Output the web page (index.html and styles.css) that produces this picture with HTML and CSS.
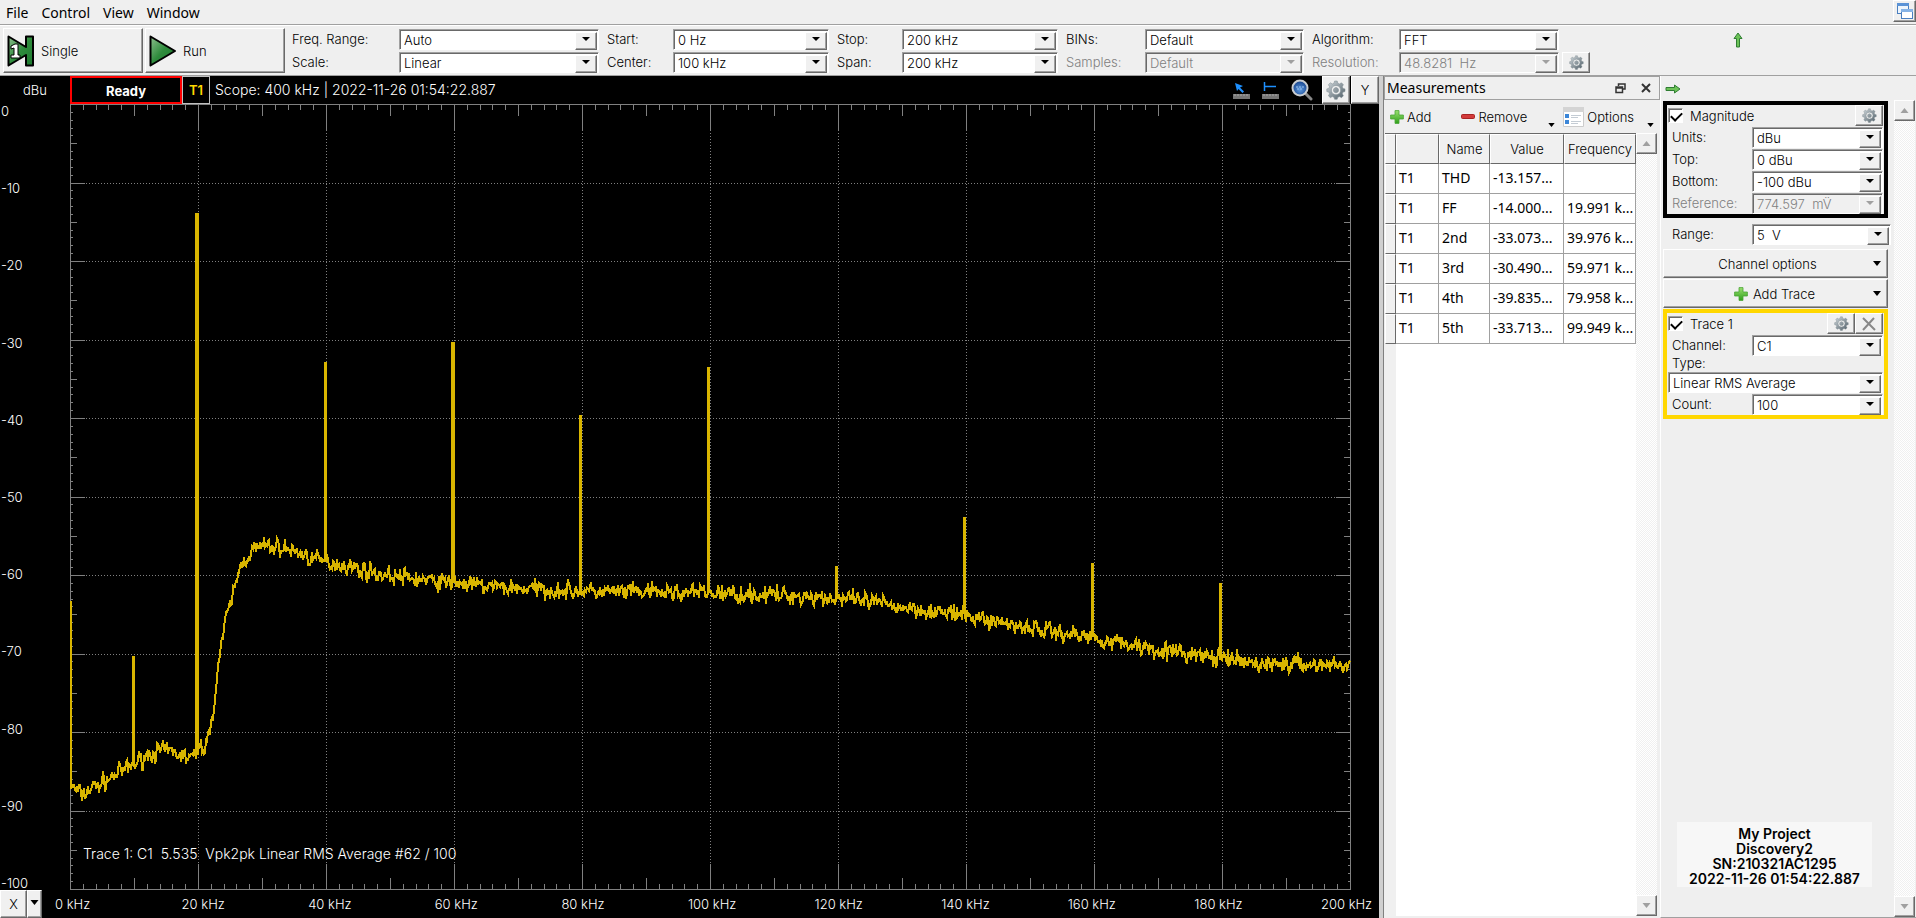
FILE: index.html
```html
<!DOCTYPE html>
<html lang="en">

<head>
    <meta charset="UTF-8">
    <meta name="viewport" content="width=device-width, initial-scale=1.0">
    <title>Spectrum</title>
    <link rel="stylesheet" href="styles.css">
</head>

<body>
    <svg class="defs" aria-hidden="true">
        <defs>
            <linearGradient id="green" x1="0" y1="0" x2="1" y2="1">
                <stop offset="0" stop-color="#8fc08f" />
                <stop offset="0.5" stop-color="#2e8b3c" />
                <stop offset="1" stop-color="#1d7a2f" />
            </linearGradient>
            <linearGradient id="metal" x1="0" y1="0" x2="1" y2="1">
                <stop offset="0" stop-color="#d3dade" />
                <stop offset="1" stop-color="#4d5c65" />
            </linearGradient>
            <linearGradient id="plus" x1="0" y1="0" x2="0" y2="1">
                <stop offset="0" stop-color="#9be070" />
                <stop offset="1" stop-color="#2ea01a" />
            </linearGradient>
            <radialGradient id="lens" cx="0.5" cy="0.6">
                <stop offset="0" stop-color="#5f9be0" />
                <stop offset="1" stop-color="#1c4c96" />
            </radialGradient>
            <symbol id="gear" viewBox="0 0 20 20">
                <path fill="url(#metal)" fill-rule="evenodd" stroke="#7b888f" stroke-width="0.5" d="M8.600 1h2.600l.6 2.200 1.700.7 2-1.100 1.900 1.900-1.100 2 .7 1.700 2 .5v2.600l-2 .6-.7 1.700 1.100 2-1.900 1.900-2-1.100-1.700.7-.6 2H8.600L8 17.300l-1.700-.7-2 1.100-1.900-1.900 1.100-2-.7-1.700-2-.6V8.900l2-.5.7-1.700-1.100-2 1.900-1.900 2 1.100L8 3.200zM10 5.500a4.600 4.600 0 1 0 .01 0zM10 7.600a2.600 2.600 0 1 1-.01 0z" />
            </symbol>
            <symbol id="add" viewBox="0 0 14 14">
                <path fill="url(#plus)" stroke="#4aa536" stroke-width="0.8" d="M5 .6h4V5h4.400v4H9v4.400H5V9H.6V5H5z" />
            </symbol>
            <symbol id="arrow" viewBox="0 0 16 10">
                <path fill="#6cc257" stroke="#2f7d32" stroke-width="1" d="M1 3.500h8.500V1L15 5 9.500 9V6.500H1z" />
            </symbol>
            <symbol id="down" viewBox="0 0 8 5">
                <path fill="currentColor" d="M0 0h8L4 5z" />
            </symbol>
        </defs>
    </svg>

    <nav class="menubar">
        <button>File</button>
        <button>Control</button>
        <button>View</button>
        <button>Window</button>
        <button class="window-button raised" aria-label="Windows">
            <svg width="18" height="18" viewBox="0 0 18 18">
                <rect x="1.500" y="1.500" width="11" height="10" fill="#eef5fc" stroke="#4a7fc0" />
                <path d="M1 1h12v3H1z" fill="#5b93d6" />
                <rect x="5.500" y="7.500" width="11" height="9" fill="#fff" stroke="#4a7fc0" />
                <path d="M5 7h12v3H5z" fill="#86b3e6" />
            </svg>
        </button>
    </nav>

    <section class="toolbar">
        <button class="run-button raised">
            <svg width="28" height="32" viewBox="0 0 28 32">
                <path d="M1.500 1.500L19 12V1.500h7v29h-7V20L1.500 30.500z" fill="url(#green)" stroke="#000" stroke-width="2" stroke-linejoin="round" />
                <path d="M4 11l4-2h3v11h2v3H4v-3h3v-7l-3 1z" fill="#fff" stroke="#000" stroke-width="1" />
            </svg>
            Single
        </button>
        <button class="run-button raised">
            <svg width="28" height="32" viewBox="0 0 28 32">
                <path d="M1.500 1.500L26 16 1.500 30.500z" fill="url(#green)" stroke="#000" stroke-width="2" stroke-linejoin="round" />
            </svg>
            Run
        </button>
        <div class="fields range-fields">
            <label for="freq-range">Freq. Range:</label>
            <span class="combo"><select id="freq-range"><option>Auto</option></select></span>
            <label for="scale">Scale:</label>
            <span class="combo"><select id="scale"><option>Linear</option></select></span>
        </div>
        <div class="fields start-fields">
            <label for="start">Start:</label>
            <span class="combo"><select id="start"><option>0 Hz</option></select></span>
            <label for="center">Center:</label>
            <span class="combo"><select id="center"><option>100 kHz</option></select></span>
        </div>
        <div class="fields stop-fields">
            <label for="stop">Stop:</label>
            <span class="combo"><select id="stop"><option>200 kHz</option></select></span>
            <label for="span">Span:</label>
            <span class="combo"><select id="span"><option>200 kHz</option></select></span>
        </div>
        <div class="fields bins-fields">
            <label for="bins">BINs:</label>
            <span class="combo"><select id="bins"><option>Default</option></select></span>
            <label for="samples" class="off">Samples:</label>
            <span class="combo off"><select id="samples" disabled><option>Default</option></select></span>
        </div>
        <div class="fields algorithm-fields">
            <label for="algorithm">Algorithm:</label>
            <span class="combo"><select id="algorithm"><option>FFT</option></select></span>
            <label for="resolution" class="off">Resolution:</label>
            <span class="combo off"><select id="resolution" disabled><option>48.8281&nbsp; Hz</option></select></span>
        </div>
        <button class="gear-button raised" aria-label="Settings"><svg width="15" height="15"><use href="#gear" /></svg></button>
        <svg class="up-arrow" width="16" height="10"><use href="#arrow" /></svg>
    </section>

    <main class="workspace">
        <section class="scope">
            <header class="scope-header">
                <span class="unit">dBu</span>
                <span class="status">Ready</span>
                <span class="trace-tag">T1</span>
                <span class="scope-info">Scope: 400 kHz | 2022-11-26 01:54:22.887</span>
                <div class="scope-tools">
                    <svg width="17" height="17" viewBox="0 0 17 17">
                        <path d="M2 1l8 3-3 1.500 4 4-1.500 1.500-4-4L4 9z" fill="#1e90ff" />
                        <path d="M0 12h17v5H0z" fill="#777" />
                        <path d="M2 12v2M5 12v2M8 12v2M11 12v2M14 12v2" stroke="#aaa" />
                    </svg>
                    <svg width="17" height="17" viewBox="0 0 17 17">
                        <path d="M2.500 0v9M2 4.500h12" stroke="#1e90ff" stroke-width="1.500" fill="none" />
                        <path d="M0 12h17v5H0z" fill="#777" />
                        <path d="M2 12v2M5 12v2M8 12v2M11 12v2M14 12v2" stroke="#aaa" />
                    </svg>
                    <svg width="22" height="22" viewBox="0 0 22 22">
                        <path d="M15 15l5 5" stroke="#888" stroke-width="3" stroke-linecap="round" />
                        <circle cx="9" cy="9" r="7.500" fill="url(#lens)" stroke="#c8ccd0" stroke-width="2" />
                        <path d="M5 8h8M6 10h6" stroke="#9cc4f0" stroke-width="1" stroke-dasharray="2 1" />
                    </svg>
                </div>
                <button class="scope-button raised" aria-label="Plot options"><svg width="20" height="20"><use href="#gear" /></svg></button>
                <button class="scope-button raised">Y</button>
            </header>
            <div class="scope-body">
                <div class="y-axis">
                    <span>0</span><span>-10</span><span>-20</span><span>-30</span><span>-40</span><span>-50</span><span>-60</span><span>-70</span><span>-80</span><span>-90</span><span>-100</span>
                </div>
                <div class="plot">
                    <svg id="plot" viewBox="0 0 1281 786" preserveAspectRatio="none">
                        <path id="grid" />
                        <path id="ticks" />
                        <polyline id="trace" />
                    </svg>
                    <span class="plot-note">Trace 1: C1&nbsp; 5.535&nbsp; Vpk2pk Linear RMS Average #62 / 100</span>
                </div>
            </div>
            <footer class="scope-footer">
                <button class="x-button raised">X</button>
                <button class="x-menu raised" aria-label="X options"><svg width="9" height="5"><use href="#down" /></svg></button>
                <div class="x-axis">
                    <span>0 kHz</span><span>20 kHz</span><span>40 kHz</span><span>60 kHz</span><span>80 kHz</span><span>100 kHz</span><span>120 kHz</span><span>140 kHz</span><span>160 kHz</span><span>180 kHz</span><span>200 kHz</span>
                </div>
            </footer>
        </section>

        <section class="measurements">
            <header class="dock-title">
                <h2>Measurements</h2>
                <svg width="11" height="11" viewBox="0 0 11 11">
                    <path d="M3.500 3V1h6.500v5H8" fill="none" stroke="#333" stroke-width="1.500" />
                    <path d="M1 4h6.500v5.500H1zM1 5h6" fill="none" stroke="#333" stroke-width="1.500" />
                </svg>
                <svg width="10" height="10" viewBox="0 0 10 10"><path d="M1 1l8 8M9 1L1 9" stroke="#333" stroke-width="2" /></svg>
            </header>
            <div class="dock-tools">
                <button><svg width="14" height="14"><use href="#add" /></svg>Add</button>
                <button class="remove-button">
                    <svg width="14" height="5" viewBox="0 0 14 5"><rect x="0.500" y="0.500" width="13" height="4" rx="1" fill="#d23a3a" stroke="#a82424" /></svg>Remove
                    <svg class="menu-mark" width="7" height="4"><use href="#down" /></svg>
                </button>
                <button class="options-button">
                    <svg width="21" height="20" viewBox="0 0 21 20">
                        <path d="M.5.5h20v19H.5z" fill="#fff" stroke="#ccc" />
                        <path d="M0 0h21v5H0z" fill="#d4d4d4" />
                        <path d="M2 7h4v4H2zM2 13h4v4H2z" fill="#3b86d8" />
                        <path d="M8 8.500h10M8 10.500h7M8 14.500h10M8 16.500h7" stroke="#c4ccd4" />
                    </svg>Options
                    <svg class="menu-mark" width="7" height="4"><use href="#down" /></svg>
                </button>
            </div>
            <div class="table-area">
                <div class="table-scroll">
                    <table>
                        <thead>
                            <tr><th class="stub"></th><th class="col-trace"></th><th class="col-name">Name</th><th class="col-value">Value</th><th class="col-freq">Frequency</th></tr>
                        </thead>
                        <tbody>
                            <tr><th class="stub"></th><td>T1</td><td>THD</td><td>-13.157...</td><td></td></tr>
                            <tr><th class="stub"></th><td>T1</td><td>FF</td><td>-14.000...</td><td>19.991 k...</td></tr>
                            <tr><th class="stub"></th><td>T1</td><td>2nd</td><td>-33.073...</td><td>39.976 k...</td></tr>
                            <tr><th class="stub"></th><td>T1</td><td>3rd</td><td>-30.490...</td><td>59.971 k...</td></tr>
                            <tr><th class="stub"></th><td>T1</td><td>4th</td><td>-39.835...</td><td>79.958 k...</td></tr>
                            <tr><th class="stub"></th><td>T1</td><td>5th</td><td>-33.713...</td><td>99.949 k...</td></tr>
                        </tbody>
                    </table>
                </div>
                <div class="scrollbar">
                    <button class="raised" aria-label="Scroll up"><svg class="flip" width="9" height="5"><use href="#down" /></svg></button>
                    <button class="raised" aria-label="Scroll down"><svg width="9" height="5"><use href="#down" /></svg></button>
                </div>
            </div>
        </section>

        <aside class="channels">
            <header class="channels-header"><svg width="16" height="10"><use href="#arrow" /></svg></header>
            <div class="channels-body">
                <div class="channel-list">
                    <div class="group">
                        <div class="group-title">
                            <input type="checkbox" id="magnitude" checked>
                            <label for="magnitude">Magnitude</label>
                            <button class="gear-button raised" aria-label="Magnitude options"><svg width="15" height="15"><use href="#gear" /></svg></button>
                        </div>
                        <div class="row">
                            <label for="units">Units:</label>
                            <span class="combo"><select id="units"><option>dBu</option></select></span>
                        </div>
                        <div class="row">
                            <label for="top">Top:</label>
                            <span class="combo"><select id="top"><option>0 dBu</option></select></span>
                        </div>
                        <div class="row">
                            <label for="bottom">Bottom:</label>
                            <span class="combo"><select id="bottom"><option>-100 dBu</option></select></span>
                        </div>
                        <div class="row">
                            <label for="reference" class="off">Reference:</label>
                            <span class="combo off"><select id="reference" disabled><option>774.597&nbsp; mV̈</option></select></span>
                        </div>
                    </div>
                    <div class="row range-row">
                        <label for="range">Range:</label>
                        <span class="combo"><select id="range"><option>5&nbsp; V</option></select></span>
                    </div>
                    <button class="wide-button raised">Channel options<svg class="menu-mark" width="8" height="5"><use href="#down" /></svg></button>
                    <button class="wide-button add-button raised"><svg width="14" height="14"><use href="#add" /></svg>Add Trace<svg class="menu-mark" width="8" height="5"><use href="#down" /></svg></button>
                    <div class="group trace-group">
                        <div class="group-title">
                            <input type="checkbox" id="trace1" checked>
                            <label for="trace1">Trace 1</label>
                            <button class="gear-button raised" aria-label="Trace options"><svg width="15" height="15"><use href="#gear" /></svg></button>
                            <button class="gear-button raised" aria-label="Remove trace"><svg width="14" height="14" viewBox="0 0 14 14"><path d="M1 1l12 12M12 1L1 13" stroke="#888" stroke-width="2" /></svg></button>
                        </div>
                        <div class="row">
                            <label for="channel">Channel:</label>
                            <span class="combo"><select id="channel"><option>C1</option></select></span>
                        </div>
                        <label class="type-label" for="type">Type:</label>
                        <div class="row">
                            <span class="combo"><select id="type"><option>Linear RMS Average</option></select></span>
                        </div>
                        <div class="row">
                            <label for="count">Count:</label>
                            <span class="combo"><select id="count"><option>100</option></select></span>
                        </div>
                    </div>
                    <div class="device-info">My Project<br>Discovery2<br>SN:210321AC1295<br>2022-11-26 01:54:22.887</div>
                </div>
                <div class="scrollbar">
                    <button class="raised" aria-label="Scroll up"><svg class="flip" width="9" height="5"><use href="#down" /></svg></button>
                    <button class="raised" aria-label="Scroll down"><svg width="9" height="5"><use href="#down" /></svg></button>
                </div>
            </div>
        </aside>
    </main>

    <script src="script.js"></script>
</body>

</html>
```
FILE: styles.css
```css
* {
    box-sizing: border-box;
}

body {
    margin: 0;
    height: 100vh;
    display: flex;
    flex-direction: column;
    overflow: hidden;
    background-color: #efefef;
    color: #000;
    font-family: Inter, "Liberation Sans", sans-serif;
    font-size: 13px;
    font-weight: 300;
    line-height: 16px;
}

button,
select {
    font: inherit;
    color: inherit;
}

button {
    display: flex;
    align-items: center;
    justify-content: center;
    padding: 0;
    border: none;
    background: none;
}

svg {
    display: block;
    flex: none;
}

.defs {
    position: absolute;
    width: 0;
    height: 0;
}

.raised {
    background-color: #f0f0f0;
    border: 1px solid;
    border-color: #fff #696969 #696969 #fff;
    box-shadow: inset -1px -1px #a0a0a0;
}

.off {
    color: #808080;
}

/* Menu bar */
.menubar {
    display: flex;
    height: 26px;
    padding-left: 6px;
    gap: 13px;
    border-bottom: 1px solid #fff;
    box-shadow: inset 0 -1px #a0a0a0;
    font-family: "Noto Sans", sans-serif;
    font-size: 14px;
    font-weight: 400;
}

.window-button {
    width: 23px;
    height: 22px;
    margin-left: auto;
}

/* Toolbar */
.toolbar {
    display: flex;
    align-items: center;
    height: 50px;
    padding: 2px 0 2px 3px;
    border-bottom: 1px solid #a0a0a0;
}

.run-button {
    width: 140px;
    height: 45px;
    margin-right: 2px;
    padding-left: 3px;
    gap: 6px;
    justify-content: flex-start;
}

.fields {
    display: grid;
    grid-template-columns: 66px 156px;
    row-gap: 2px;
    align-items: center;
    margin-left: 8px;
}

.range-fields {
    grid-template-columns: 107px 200px;
    margin-left: 5px;
}

.stop-fields {
    grid-template-columns: 65px 156px;
}

.bins-fields {
    grid-template-columns: 79px 159px;
}

.algorithm-fields {
    grid-template-columns: 87px 160px;
}

.combo {
    position: relative;
    display: block;
    height: 21px;
    border: 1px solid;
    border-color: #a0a0a0 #fff #fff #a0a0a0;
    box-shadow: inset 1px 1px #696969;
    background-color: #fff;
}

.combo select {
    width: 100%;
    height: 19px;
    padding: 1px 20px 0 4px;
    border: none;
    background: none;
    appearance: none;
    opacity: 1;
}

.combo::before {
    content: "";
    position: absolute;
    top: 2px;
    right: 1px;
    width: 20px;
    height: 16px;
    background-color: #f0f0f0;
    border: 1px solid;
    border-color: #fff #696969 #696969 #fff;
    box-shadow: inset -1px -1px #a0a0a0;
}

.combo::after {
    content: "";
    position: absolute;
    top: 7px;
    right: 8px;
    border: 4px solid transparent;
    border-top: 4px solid #000;
    border-bottom: none;
}

.combo.off {
    background-color: #f0f0f0;
}

.combo.off::after {
    border-top-color: #a0a0a0;
}

.gear-button {
    width: 28px;
    height: 21px;
}

.toolbar .gear-button {
    align-self: flex-end;
    margin-left: 3px;
}

.up-arrow {
    transform: rotate(-90deg);
    align-self: flex-start;
    margin: 7px 170px 0 auto;
}

/* Workspace */
.workspace {
    display: flex;
    flex: 1;
    min-height: 0;
}

.scope {
    display: flex;
    flex-direction: column;
    flex: 1;
    min-width: 0;
    background-color: #000;
    color: #fff;
}

.scope button {
    color: #000;
}

.scope-header {
    display: flex;
    align-items: center;
    height: 28px;
}

.unit {
    width: 70px;
    text-align: center;
}

.status {
    width: 112px;
    height: 28px;
    border: 2px solid #f00;
    font-weight: bold;
    line-height: 26px;
    text-align: center;
}

.trace-tag {
    width: 28px;
    height: 28px;
    border: 1px solid #c0c0c0;
    color: #ffd700;
    font-weight: 600;
    line-height: 27px;
    text-align: center;
}

.scope-info {
    margin-left: 5px;
    font-size: 14px;
}

.scope-tools {
    display: flex;
    align-items: center;
    gap: 12px;
    margin: 0 8px 0 auto;
}

.scope-button {
    width: 28px;
    height: 28px;
    margin-left: 1px;
}

.scope-body {
    display: flex;
    flex: 1;
    min-height: 0;
}

.y-axis {
    display: flex;
    flex-direction: column;
    justify-content: space-between;
    width: 70px;
    padding-left: 1px;
    line-height: 14px;
}

.plot {
    position: relative;
    flex: 1;
    margin-right: 28px;
}

#plot {
    width: 100%;
    height: 100%;
}

#grid,
#ticks {
    fill: none;
    stroke: #808080;
    shape-rendering: crispEdges;
}

#grid {
    stroke-dasharray: 1 2;
}

#trace {
    fill: none;
    stroke: #d9b500;
    stroke-width: 2;
    shape-rendering: crispEdges;
}

.plot-note {
    position: absolute;
    left: 13px;
    bottom: 28px;
    font-size: 14px;
}

.scope-footer {
    display: flex;
    height: 28px;
}

.x-button {
    width: 27px;
}

.x-menu {
    width: 15px;
    padding-bottom: 4px;
}

.x-axis {
    display: flex;
    flex: 1;
    justify-content: space-between;
    align-items: center;
    margin: 0 6px 0 13px;
}

.x-axis span {
    width: 52px;
    white-space: nowrap;
}

/* Measurements */
.measurements {
    display: flex;
    flex-direction: column;
    width: 281px;
    border-left: 4px solid #d0d0d0;
    box-shadow: inset 1px 0 #808080;
}

.dock-title {
    display: flex;
    align-items: center;
    height: 24px;
    margin-left: 1px;
    padding: 0 8px 0 2px;
    gap: 15px;
    border: 1px solid #a0a0a0;
}

.dock-title h2 {
    flex: 1;
    margin: 0;
    font-family: "Noto Sans", sans-serif;
    font-size: 14px;
    font-weight: normal;
}

.dock-tools {
    display: flex;
    align-items: center;
    height: 33px;
    padding: 0 6px 0 7px;
}

.dock-tools button {
    height: 28px;
    gap: 3px;
}

.dock-tools .remove-button {
    margin-left: auto;
}

.dock-tools .options-button {
    margin-left: 8px;
}

.dock-tools .menu-mark {
    align-self: flex-end;
    margin: 0 0 4px 10px;
}

.dock-tools .remove-button .menu-mark {
    margin-left: 18px;
}

.table-area {
    display: flex;
    flex: 1;
    min-height: 0;
    margin: 0 3px 2px 2px;
}

.table-scroll {
    flex: 1;
    border-top: 1px solid #696969;
    background: linear-gradient(to right, #f0f0f0 11px, #fff 11px);
}

table {
    width: 100%;
    table-layout: fixed;
    border-collapse: separate;
    border-spacing: 0;
    font-family: "Noto Sans", sans-serif;
    font-size: 14px;
    font-weight: 400;
}

th {
    height: 30px;
    padding: 0;
    overflow: hidden;
    background-color: #f0f0f0;
    border: 1px solid;
    border-color: #fff #696969 #696969 #fff;
    font-family: Inter, sans-serif;
    font-size: 13px;
    font-weight: 300;
}

.stub {
    width: 11px;
}

.col-trace {
    width: 43px;
}

.col-name {
    width: 51px;
}

.col-value {
    width: 74px;
}

td {
    height: 30px;
    padding: 0 0 1px 3px;
    border-right: 1px solid #a0a0a0;
    border-bottom: 1px solid #a0a0a0;
    white-space: nowrap;
}

.scrollbar {
    display: flex;
    flex-direction: column;
    justify-content: space-between;
    width: 21px;
    background: repeating-conic-gradient(#fff 0 25%, #f0f0f0 0 50%) 0 0 / 2px 2px;
}

.scrollbar button {
    width: 21px;
    height: 21px;
    color: #a0a0a0;
}

.flip {
    transform: rotate(180deg);
}

/* Channels */
.channels {
    display: flex;
    flex-direction: column;
    width: 256px;
    border-left: 1px solid #fff;
    border-bottom: 1px solid #a0a0a0;
}

.channels-header {
    height: 24px;
    padding: 8px 4px;
}

.channels-body {
    display: flex;
    flex: 1;
    min-height: 0;
    padding-right: 2px;
}

.channel-list {
    display: flex;
    flex-direction: column;
    flex: 1;
    padding: 1px 3px 30px 2px;
}

.group {
    width: 225px;
    border: 4px solid #000;
    padding: 0 1px;
}

.trace-group {
    border-color: #ffd700;
}

.group-title {
    display: flex;
    align-items: center;
    height: 21px;
}

.group-title label {
    flex: 1;
    margin-left: 7px;
}

input[type="checkbox"] {
    appearance: none;
    width: 15px;
    height: 15px;
    margin: 0;
    background: #fff;
    border: 1px solid;
    border-color: #a0a0a0 #fff #fff #a0a0a0;
    box-shadow: inset 1px 1px #696969;
}

input[type="checkbox"]:checked::before {
    content: "";
    display: block;
    width: 9px;
    height: 5px;
    margin: 3px 0 0 2px;
    border: 2px solid #000;
    border-top: none;
    border-right: none;
    transform: rotate(-45deg);
}

.row {
    display: flex;
    align-items: center;
    height: 22px;
}

.row label {
    width: 84px;
    padding-left: 4px;
}

.row .combo {
    flex: 1;
}

.range-row {
    width: 228px;
    margin: 5px 0 4px;
    padding-left: 5px;
}

.wide-button {
    position: relative;
    width: 225px;
    height: 29px;
    margin-bottom: 1px;
    gap: 5px;
    padding-right: 16px;
}

.add-button {
    padding-right: 2px;
}

.wide-button .menu-mark {
    position: absolute;
    right: 6px;
    top: 11px;
}

.type-label {
    display: block;
    padding-left: 4px;
    line-height: 15px;
}

.device-info {
    width: 195px;
    margin: auto auto 0 14px;
    padding: 4px 0 1px;
    background-color: #f7f7f7;
    font-size: 14px;
    font-weight: 600;
    line-height: 15px;
    text-align: center;
}
```
FILE: script.js
```js
// Plot area: 0..200 kHz over 1280 units, 0..-100 dBu over 785 units
var W = 1280;
var H = 785;

function drawGrid() {
    var grid = '';
    var ticks = 'M0.5 0.5H1280.5V785.5H0.5Z';
    var i, x, y, len;

    for (i = 1; i < 10; i++) {
        x = Math.round(i * W / 10) + 0.5;
        y = Math.round(i * H / 10) + 0.5;
        grid += 'M' + x + ' 26V760M16 ' + y + 'H1265';
    }
    for (i = 1; i < 100; i++) {
        x = Math.round(i * W / 100) + 0.5;
        y = Math.round(i * H / 100) + 0.5;
        len = i % 10 === 0 ? 26 : i % 5 === 0 ? 12 : 6;
        ticks += 'M' + x + ' 0v' + len + 'M' + x + ' 786v-' + len;
        len = i % 10 === 0 ? 15 : i % 5 === 0 ? 7 : 3;
        ticks += 'M0 ' + y + 'h' + len + 'M1281 ' + y + 'h-' + len;
    }
    document.getElementById('grid').setAttribute('d', grid);
    document.getElementById('ticks').setAttribute('d', ticks);
}

// Noise floor as [kHz, dBu]
var floor = [[0, -86.8], [1, -87.5], [2, -88], [3, -87.3], [5, -86.5], [7, -85.5], [9, -84.6], [12, -83], [14, -82.4],
    [16, -82.5], [18, -83.2], [19.5, -83.2], [20.4, -81.6], [21, -82], [21.7, -80.8], [22.2, -78], [22.8, -74.5],
    [23.4, -69.8], [24.4, -65.7], [25.5, -62.3], [26.8, -58.5], [28.9, -56.6], [30.7, -56.3], [32.8, -56.5],
    [35.9, -57.2], [39, -58.2], [42.7, -58.7], [48.4, -59.9], [55.7, -60.7], [60.9, -61.1], [66, -61.5], [80, -62.1],
    [100, -62.3], [115, -62.7], [120, -63], [130, -64], [140, -65.2], [150, -66.7], [160, -68], [170, -69.5],
    [180, -70.7], [185, -71.3], [200, -71.5]];

// Harmonics as [left px, right px, dBu]
var peaks = [[1, 1, -63.3], [63, 64, -70.5], [126, 128, -14], [255, 256, -33], [382, 384, -30.4], [510, 511, -39.8],
    [638, 639, -33.6], [766, 767, -59], [894, 895, -52.8], [1022, 1023, -58.6], [1150, 1151, -61.2]];

var seed = 7;
function random() {
    seed = (seed * 16807) % 2147483647;
    return seed / 2147483647;
}

function floorAt(khz) {
    for (var i = 1; i < floor.length; i++) {
        if (khz <= floor[i][0]) {
            var a = floor[i - 1];
            var b = floor[i];
            return a[1] + (b[1] - a[1]) * (khz - a[0]) / (b[0] - a[0]);
        }
    }
    return floor[floor.length - 1][1];
}

function drawTrace() {
    var points = [];
    function add(x, db) {
        points.push(x + ',' + Math.round(-db * H / 100));
    }
    for (var x = 1; x <= W; x++) {
        var base = floorAt(x * 200 / W);
        var noise = (random() + random() + random() - 1.5) * 1.2;
        add(x, base + noise);
        peaks.forEach(function (p) {
            if (p[0] === x) {
                add(x, p[2]);
                add(p[1], p[2]);
                add(p[1], base);
                x = p[1];
            }
        });
    }
    document.getElementById('trace').setAttribute('points', points.join(' '));
}

drawGrid();
drawTrace();
```
